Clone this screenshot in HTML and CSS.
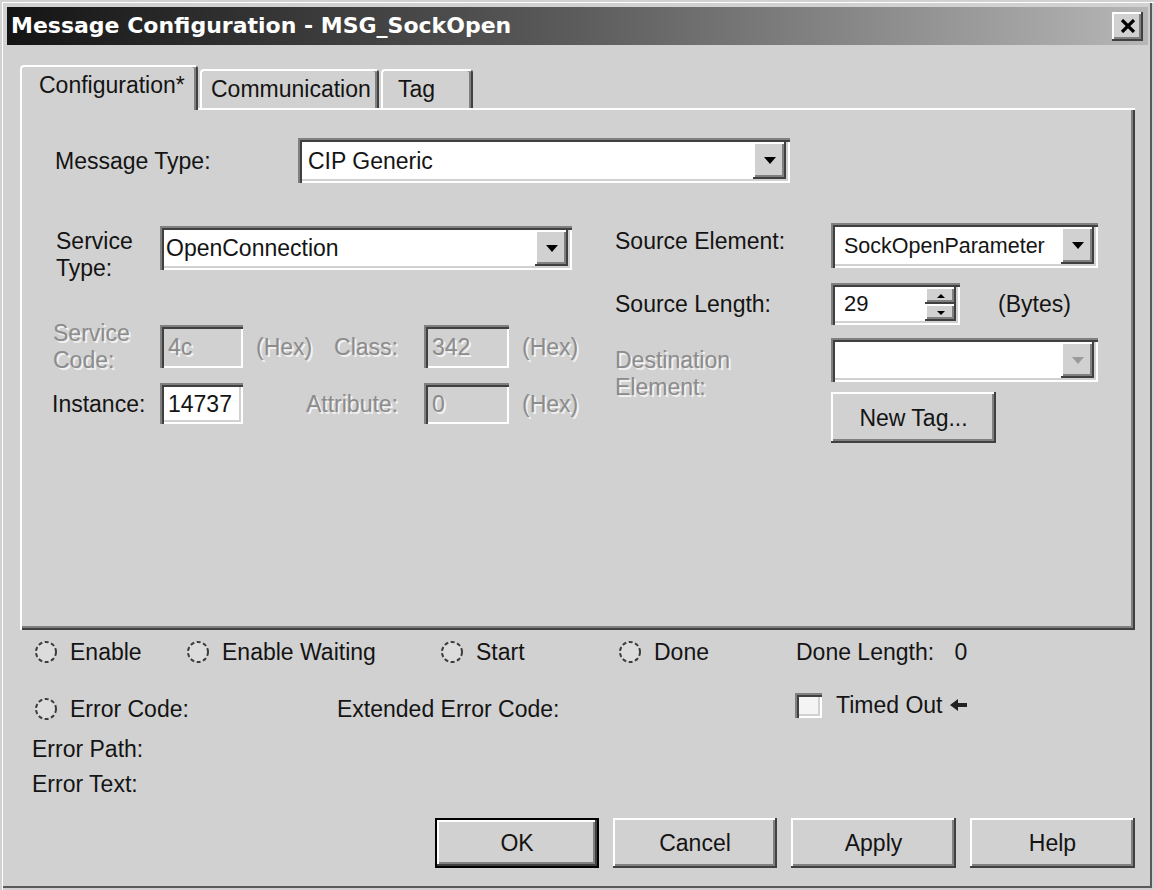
FILE: index.html
```html
<!DOCTYPE html>
<html lang="en">
<head>
    <meta charset="UTF-8">
    <title>Message Configuration - MSG_SockOpen</title>
    <link rel="stylesheet" href="styles.css">
</head>
<body>
    <div class="window">
        <div class="titlebar">
            <span class="title">Message Configuration - MSG_SockOpen</span>
            <div class="close-btn raised">
                <svg width="16" height="14" viewBox="0 0 16 14"><path d="M2 1 L14 13 M14 1 L2 13" stroke="#000" stroke-width="3.2"/></svg>
            </div>
        </div>

        <div class="dialog-body">
            <div class="tabs">
                <div class="tab tab-active tab-config">Configuration*</div>
                <div class="tab tab-comm">Communication</div>
                <div class="tab tab-tag">Tag</div>
            </div>

            <div class="panel">
                <div class="type-row">
                    <span class="type-label">Message Type:</span>
                    <div class="combo combo-type sunken">
                        <span class="combo-text">CIP Generic</span>
                        <span class="drop-btn raised"><i class="arrow-down"></i></span>
                    </div>
                </div>

                <div class="params">
                    <div class="cip-grid">
                        <div class="two-line svc-type r1">Service<br>Type:</div>
                        <div class="combo combo-service sunken r1">
                            <span class="combo-text">OpenConnection</span>
                            <span class="drop-btn raised"><i class="arrow-down"></i></span>
                        </div>

                        <div class="two-line svc-code disabled r2">Service<br>Code:</div>
                        <div class="field sunken field-off r2">4c</div>
                        <span class="hex disabled r2">(Hex)</span>
                        <span class="right-lbl disabled r2">Class:</span>
                        <div class="field sunken field-off r2">342</div>
                        <span class="hex disabled r2">(Hex)</span>

                        <span class="lbl r3">Instance:</span>
                        <div class="field sunken field-on r3">14737</div>
                        <span class="right-lbl attr-lbl disabled r3">Attribute:</span>
                        <div class="field sunken field-off r3">0</div>
                        <span class="hex disabled r3">(Hex)</span>
                    </div>

                    <div class="tag-grid">
                        <span class="lbl src-elem-lbl t1">Source Element:</span>
                        <div class="combo combo-src sunken t1">
                            <span class="combo-text">SockOpenParameter</span>
                            <span class="drop-btn raised"><i class="arrow-down"></i></span>
                        </div>

                        <span class="lbl t2">Source Length:</span>
                        <div class="len-row t2">
                            <div class="spin sunken">
                                <span class="spin-val">29</span>
                                <span class="spin-btns">
                                    <span class="spin-btn raised"><i class="arrow-up-sm"></i></span>
                                    <span class="spin-btn raised"><i class="arrow-down-sm"></i></span>
                                </span>
                            </div>
                            <span class="bytes">(Bytes)</span>
                        </div>

                        <div class="two-line dest-lbl disabled t3">Destination<br>Element:</div>
                        <div class="combo combo-dest sunken t3">
                            <span class="combo-text"></span>
                            <span class="drop-btn raised"><i class="arrow-down arrow-off"></i></span>
                        </div>

                        <div class="push-btn raised new-tag t4">New Tag...</div>
                    </div>
                </div>
            </div>

            <div class="status">
                <div class="radio s1">
                    <svg width="24" height="24" viewBox="0 0 24 24"><circle cx="12" cy="12" r="10" fill="#dcdcdc" stroke="#3c3c3c" stroke-width="2" stroke-dasharray="4 2.5"/></svg>
                    Enable
                </div>
                <div class="radio s1 span2">
                    <svg width="24" height="24" viewBox="0 0 24 24"><circle cx="12" cy="12" r="10" fill="#dcdcdc" stroke="#3c3c3c" stroke-width="2" stroke-dasharray="4 2.5"/></svg>
                    Enable Waiting
                </div>
                <div class="radio s1">
                    <svg width="24" height="24" viewBox="0 0 24 24"><circle cx="12" cy="12" r="10" fill="#dcdcdc" stroke="#3c3c3c" stroke-width="2" stroke-dasharray="4 2.5"/></svg>
                    Start
                </div>
                <div class="radio s1">
                    <svg width="24" height="24" viewBox="0 0 24 24"><circle cx="12" cy="12" r="10" fill="#dcdcdc" stroke="#3c3c3c" stroke-width="2" stroke-dasharray="4 2.5"/></svg>
                    Done
                </div>
                <div class="done-len s1">Done Length: <span class="done-val">0</span></div>

                <div class="radio s2 span2">
                    <svg width="24" height="24" viewBox="0 0 24 24"><circle cx="12" cy="12" r="10" fill="#dcdcdc" stroke="#3c3c3c" stroke-width="2" stroke-dasharray="4 2.5"/></svg>
                    Error Code:
                </div>
                <div class="ext-code s2">Extended Error Code:</div>
                <div class="check s2">
                    <span class="check-box sunken"></span>
                    Timed Out
                    <svg class="back-arrow" width="18" height="12" viewBox="0 0 18 12"><path d="M0 6 L8 0 L8 4 L17 4 L17 8 L8 8 L8 12 Z" fill="#222"/></svg>
                </div>

                <div class="err-line s3">Error Path:</div>
                <div class="err-line s4">Error Text:</div>
            </div>

            <div class="buttons">
                <div class="push-btn raised btn-default">OK</div>
                <div class="push-btn raised">Cancel</div>
                <div class="push-btn raised wide">Apply</div>
                <div class="push-btn raised wide">Help</div>
            </div>
        </div>
    </div>
</body>
</html>
```

FILE: styles.css
```css
html, body{
    margin: 0;
    background: #d1d1d1;
}
body{
    font-family: "Liberation Sans", Arial, sans-serif;
    font-size: 23px;
    line-height: 26px;
    color: #141414;
}
.window{
    width: 1154px;
    height: 890px;
    box-sizing: border-box;
    padding: 7px 6px 0 7px;
    box-shadow: inset 2px 2px 0 #d1d1d1, inset 3px 3px 0 #fff, inset -2px -2px 0 #d1d1d1, inset -4px -4px 0 #5a5a5a;
}

/* title bar */
.titlebar{
    height: 38px;
    display: flex;
    align-items: center;
    justify-content: space-between;
    padding: 0 5px 0 4px;
    background: linear-gradient(to right, #141414 0%, #5c5c5c 50%, #b6b6b6 100%);
}
.title{
    font-family: "DejaVu Sans", sans-serif;
    font-weight: bold;
    font-size: 22px;
    color: #fff;
}
.close-btn{
    width: 31px;
    height: 29px;
    display: flex;
    align-items: center;
    justify-content: center;
}

/* 3d borders */
.raised{
    background: #d1d1d1;
    box-shadow: inset -2px -2px 0 #404040, inset 2px 2px 0 #fff, inset -4px -4px 0 #808080;
}
.sunken{
    box-sizing: border-box;
    padding: 4px;
    box-shadow: inset 2px 2px 0 #808080, inset 4px 4px 0 #404040, inset -2px -2px 0 #fff, inset -4px -4px 0 #d1d1d1;
}

.dialog-body{
    padding: 0 13px;
}

/* tabs */
.tabs{
    display: flex;
    align-items: flex-end;
    height: 43px;
    margin-top: 20px;
}
.tab{
    box-sizing: border-box;
    height: 39px;
    padding-top: 5px;
    border-top: 2px solid #fff;
    border-left: 2px solid #fff;
    border-right: 2px solid #404040;
    border-radius: 4px 4px 0 0;
    box-shadow: inset -2px 0 0 #808080;
    margin-left: 2px;
}
.tab-active{
    height: 45px;
    margin: 0 0 -2px 0;
    position: relative;
    z-index: 1;
    background: #d1d1d1;
}
.tab-config{
    width: 178px;
    padding-left: 17px;
}
.tab-comm{
    width: 179px;
    padding-left: 9px;
}
.tab-tag{
    width: 92px;
    padding-left: 15px;
}

/* panel */
.panel{
    height: 522px;
    box-sizing: border-box;
    padding: 30px 0 0 32px;
    box-shadow: inset 2px 2px 0 #fff, inset -2px -2px 0 #404040, inset -4px -4px 0 #808080;
}
.type-row{
    display: flex;
    align-items: center;
}
.type-label{
    width: 243px;
    margin-left: 3px;
}

.combo{
    display: flex;
    background: #fff;
}
.combo-text{
    flex: 1;
    align-self: center;
    white-space: nowrap;
    overflow: hidden;
}
.drop-btn{
    width: 33px;
    display: flex;
    align-items: center;
    justify-content: center;
}
.arrow-down{
    width: 0;
    height: 0;
    border-left: 6px solid transparent;
    border-right: 6px solid transparent;
    border-top: 7px solid #000;
}
.arrow-off{
    border-top-color: #9a9a9a;
}
.combo-type{
    width: 492px;
    height: 45px;
}
.combo-type .combo-text{
    padding-left: 6px;
}
.combo-service{
    grid-column: span 5;
    justify-self: start;
    width: 412px;
    height: 44px;
}
.combo-service .combo-text{
    padding-left: 2px;
}

.params{
    display: flex;
    margin-top: 40px;
}

/* left block */
.cip-grid{
    display: grid;
    grid-template-columns: 108px 83px 77px 104px 85px 73px;
    grid-template-rows: 44px 55px 43px 15px 41px;
    align-items: center;
    margin-top: 3px;
}
.r1{ grid-row: 1; }
.r2{ grid-row: 3; }
.r3{ grid-row: 5; }
.two-line{
    line-height: 27px;
    align-self: start;
}
.svc-type{
    padding-left: 4px;
    margin-top: 2px;
}
.svc-code{
    padding-left: 1px;
    margin-top: -5px;
}
.disabled{
    color: #8c8c8c;
    text-shadow: 2px 2px 0 #f2f2f2;
}
.field{
    display: flex;
    align-items: center;
    height: 100%;
    padding: 0 0 0 8px;
    white-space: nowrap;
}
.field-off{
    color: #8c8c8c;
    text-shadow: 2px 2px 0 #f2f2f2;
}
.field-on{
    background: #fff;
}
.hex{
    padding-left: 13px;
}
.right-lbl{
    justify-self: end;
    padding-right: 26px;
}
.attr-lbl{
    grid-column: span 2;
}

/* right block */
.tag-grid{
    display: grid;
    grid-template-columns: 216px 267px;
    grid-template-rows: 45px 15px 42px 13px 44px 10px 51px;
    align-items: center;
    margin-left: 33px;
}
.t1{ grid-row: 1; }
.t2{ grid-row: 3; }
.t3{ grid-row: 5; }
.t4{ grid-row: 7; grid-column: 2; }
.src-elem-lbl{
    margin-top: -10px;
}
.combo-src, .combo-dest{
    height: 100%;
}
.combo-src .combo-text{
    padding-left: 9px;
    font-size: 21.5px;
}
.len-row{
    display: flex;
    align-items: center;
    gap: 38px;
    height: 100%;
}
.spin{
    display: flex;
    width: 129px;
    height: 100%;
    background: #fff;
}
.spin-val{
    flex: 1;
    align-self: center;
    padding-left: 9px;
    font-size: 22px;
}
.spin-btns{
    display: flex;
    flex-direction: column;
    width: 31px;
}
.spin-btn{
    flex: 1;
    display: flex;
    align-items: center;
    justify-content: center;
}
.arrow-up-sm, .arrow-down-sm{
    width: 0;
    height: 0;
    border-left: 4px solid transparent;
    border-right: 4px solid transparent;
}
.arrow-up-sm{
    border-bottom: 4px solid #000;
}
.arrow-down-sm{
    border-top: 4px solid #000;
}
.dest-lbl{
    margin-top: 9px;
}
.new-tag{
    width: 165px;
    height: 51px;
}

.push-btn{
    box-sizing: border-box;
    display: flex;
    align-items: center;
    justify-content: center;
}

/* status area */
.status{
    display: grid;
    grid-template-columns: 152px 151px 103px 178px 178px 1fr;
    grid-template-rows: 57px 40px 35px 26px;
    align-items: start;
    margin-top: 9px;
    padding-left: 14px;
}
.s1{ grid-row: 1; }
.s2{ grid-row: 2; }
.s3{ grid-row: 3; grid-column: 1 / span 3; }
.s4{ grid-row: 4; grid-column: 1 / span 3; }
.span2{
    grid-column: span 2;
}
.radio{
    display: flex;
    align-items: center;
    gap: 12px;
    white-space: nowrap;
}
.done-len{
    white-space: nowrap;
}
.done-val{
    margin-left: 14px;
}
.ext-code{
    grid-column: span 3;
    white-space: nowrap;
}
.check{
    display: flex;
    align-items: center;
    margin-top: -4px;
    margin-left: -1px;
    white-space: nowrap;
}
.check-box{
    width: 27px;
    height: 25px;
    margin-right: 14px;
    background: #f4f4f4;
}
.back-arrow{
    margin-left: 7px;
}
.err-line{
    margin-left: -2px;
}

/* dialog buttons */
.buttons{
    display: flex;
    justify-content: flex-end;
    gap: 14px;
    margin-top: 21px;
}
.buttons .push-btn{
    width: 164px;
    height: 50px;
}
.buttons .wide{
    width: 165px;
}
.btn-default{
    border: 2px solid #000;
}
```
